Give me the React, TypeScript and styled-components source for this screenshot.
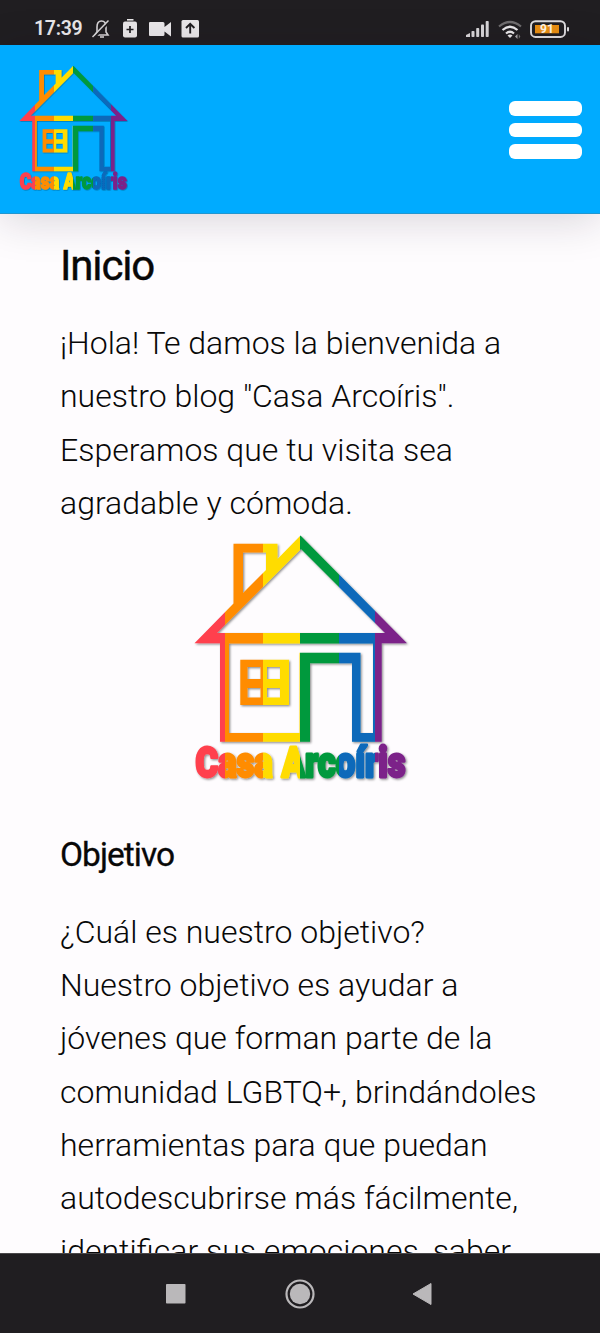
import React from "react";
import styled, { createGlobalStyle } from "styled-components";

const GlobalStyle = createGlobalStyle`
  * { box-sizing: border-box; }
  body { margin: 0; background: #fefcfe; font-family: Roboto, sans-serif; color: #080808; }
`;

const Screen = styled.div`
  display: flex;
  flex-direction: column;
  width: 600px;
  height: 1333px;
  overflow: hidden;
`;

const StatusBar = styled.div`
  display: flex;
  align-items: center;
  flex: none;
  height: 45px;
  padding: 13px 30px 0 34px;
  background: #201e21;
  color: #e9e7e9;
`;

const Clock = styled.span`
  width: 57px;
  font-size: 19.5px;
  line-height: 32px;
  font-weight: 600;
  letter-spacing: -0.3px;
`;

const StatusIcons = styled.svg<{ $push?: boolean }>`
  display: block;
  flex: none;
  margin-left: ${(p) => (p.$push ? "auto" : "0")};
`;

const Header = styled.header`
  display: flex;
  flex: none;
  align-items: flex-start;
  justify-content: space-between;
  height: 169px;
  padding: 17.5px 18px 0 17px;
  background: #00abff;
  border-bottom: 1px solid #2196cf;
  box-shadow: 0 6px 40px rgba(30, 20, 40, 0.17);
  z-index: 1;
`;

const MenuButton = styled.button`
  display: flex;
  flex-direction: column;
  gap: 7px;
  width: 73px;
  margin: 38.5px 0 0;
  padding: 0;
  border: 0;
  background: none;
`;

const MenuBar = styled.span`
  height: 14.7px;
  border-radius: 6px;
  background: #fff;
`;

const Content = styled.main`
  flex: 1;
  min-height: 0;
  overflow: hidden;
  padding: 27px 0 0 60px;
`;

const Title = styled.h1`
  margin: 0;
  font-size: 42px;
  line-height: 50px;
  font-weight: 400;
  letter-spacing: -1.15px;
  -webkit-text-stroke: 0.4px #080808;
`;

const Subtitle = styled.h2`
  margin: 39.5px 0 0;
  font-size: 33.5px;
  line-height: 50px;
  font-weight: 400;
  letter-spacing: -0.95px;
  -webkit-text-stroke: 0.3px #080808;
`;

const Text = styled.p`
  margin: 26px 0 0;
  font-size: 32px;
  line-height: 53.3px;
  font-weight: 300;
  white-space: nowrap;
`;

const Figure = styled.div`
  display: flex;
  justify-content: center;
  width: 482px;
`;

const LogoSvg = styled.svg`
  display: block;
  flex: none;
`;

const NavBar = styled.nav`
  display: flex;
  flex: none;
  align-items: center;
  justify-content: center;
  height: 80px;
  padding-right: 1px;
  background: #201e21;
  border-top: 1px solid #4a484a;
`;

const bands: [string, number, number][] = [
  ["#ff3f4d", 190, 225],
  ["#ff8c00", 225, 263],
  ["#ffdc00", 263, 300.5],
  ["#06993c", 300.5, 339],
  ["#0769ba", 339, 375],
  ["#7b2189", 375, 412],
];

function Logo({ id, width, height, shade }: { id: string; width: number; height: number; shade: number }) {
  return (
    <LogoSvg width={width} height={height} viewBox="190 530 222 260" preserveAspectRatio="none" aria-label="Casa Arcoíris">
      <defs>
        <linearGradient id={id} gradientUnits="userSpaceOnUse" x1="190" y1="0" x2="412" y2="0">
          {bands.map(([color, from, to]) => (
            <React.Fragment key={color}>
              <stop offset={(from - 190) / 222} stopColor={color} />
              <stop offset={(to - 190) / 222} stopColor={color} />
            </React.Fragment>
          ))}
        </linearGradient>
        <filter id={`${id}-shadow`} x="-5%" y="-5%" width="110%" height="110%">
          <feDropShadow dx="1.2" dy="1.2" stdDeviation="0.9" floodColor="#000" floodOpacity={shade} />
        </filter>
      </defs>
      <g fill={`url(#${id})`} filter={`url(#${id}-shadow)`}>
        <path
          fillRule="evenodd"
          d="M300.5 535.5L407 643.3H381.7V741.7H352V663.3H310V741.7H220V643.3H194.5L233.5 603.5V543.7H277.5V559ZM301 549L217 633H385ZM243 552.5V593L266 570V552.5ZM229 643.5V733H299.5V652.7H360.5V733H373V643.5Z"
        />
        <path
          fillRule="evenodd"
          d="M240.3 659.7H289V705H240.3ZM247.5 667V679H260.5V667ZM267 667V679H280V667ZM247.5 688V697.5H260.5V688ZM267 688V697.5H280V688Z"
        />
        <text
          x="195.500"
          y="777"
          textLength="210"
          lengthAdjust="spacingAndGlyphs"
          fontFamily="Roboto, sans-serif"
          fontWeight="900"
          fontSize="42"
          stroke={`url(#${id})`}
          strokeWidth="2.8"
          strokeLinejoin="round"
        >
          Casa Arcoíris
        </text>
      </g>
    </LogoSvg>
  );
}

export default function App() {
  return (
    <Screen>
      <GlobalStyle />
      <StatusBar>
        <Clock>17:39</Clock>
        <StatusIcons width="110" height="24" viewBox="91 17 110 24">
          <path d="M95 35H108L106 32V27Q106 21 101.500 21Q97 21 97 27V32Z" fill="none" stroke="#d6d4d6" strokeWidth="1.6" />
          <path d="M100 37h4" stroke="#d6d4d6" strokeWidth="1.6" />
          <path d="M94 38L110 21" stroke="#201e21" strokeWidth="2" />
          <path d="M92.500 37L108.500 20.500" stroke="#d6d4d6" strokeWidth="1.5" />
          <rect x="123" y="21.500" width="14" height="16" rx="2" fill="#e9e7e9" />
          <path d="M127 19.800h6.500" stroke="#e9e7e9" strokeWidth="1.6" />
          <path d="M126.500 29.500h7M130 26v7" stroke="#201e21" strokeWidth="1.700" />
          <path d="M150 22h13q1.500 0 1.500 1.500v3.500l6.500-5v14.500l-6.500-5V34.500q0 1.500-1.500 1.500h-13q-1 0-1-1V23q0-1 1-1Z" fill="#e9e7e9" />
          <rect x="181.500" y="20" width="17.500" height="17.500" rx="1.500" fill="#e9e7e9" />
          <path d="M190.200 33.500V23.800M186 28l4.200-4.200 4.200 4.200" fill="none" stroke="#201e21" strokeWidth="1.9" />
        </StatusIcons>
        <StatusIcons $push width="105" height="24" viewBox="465 17 105 24">
          <g fill="#d8d6d8">
            <path d="M466 37v-2l4-2v4Z" />
            <rect x="471.500" y="31" width="3" height="6" rx="0.800" />
            <rect x="476.200" y="28" width="3" height="9" rx="0.800" />
            <rect x="481" y="24.500" width="3" height="12.500" rx="0.800" />
            <rect x="485.700" y="21" width="3" height="16" rx="0.800" />
          </g>
          <g fill="none" strokeWidth="2.200">
            <path d="M499 26.500Q510 17.500 521 26.500" stroke="#6f6d6f" />
            <path d="M502.500 30Q510 23.500 517.500 30" stroke="#e9e7e9" />
            <path d="M506 33.500Q510 30 514 33.500" stroke="#e9e7e9" />
          </g>
          <path d="M507.500 35.500Q510 33.500 512.500 35.500L510 38Z" fill="#e9e7e9" />
          <path d="M517.500 34v5l-2.500-2.500Z" fill="#a9a7a9" />
          <path d="M518.800 34v5l1.500-2.500Z" fill="#777" />
          <rect x="531" y="21.200" width="34" height="15.800" rx="4.500" fill="none" stroke="#dedcde" strokeWidth="1.900" />
          <rect x="535" y="25" width="24" height="8.300" fill="#e98e12" />
          <rect x="567" y="27" width="2" height="4.500" rx="1" fill="#dedcde" />
          <text x="547" y="33.300" textAnchor="middle" fill="#fff4e4" fontFamily="Roboto, sans-serif" fontSize="12" fontWeight="700">91</text>
        </StatusIcons>
      </StatusBar>
      <Header>
        <Logo id="logo-header" width={113} height={133} shade={0.35} />
        <MenuButton aria-label="Menú">
          <MenuBar />
          <MenuBar />
          <MenuBar />
        </MenuButton>
      </Header>
      <Content>
        <Title>Inicio</Title>
        <Text>
          ¡Hola! Te damos la bienvenida a<br />
          nuestro blog "Casa Arcoíris".<br />
          Esperamos que tu visita sea<br />
          agradable y cómoda.
        </Text>
        <Figure>
          <Logo id="logo-main" width={222} height={260} shade={0.45} />
        </Figure>
        <Subtitle>Objetivo</Subtitle>
        <Text>
          ¿Cuál es nuestro objetivo?<br />
          Nuestro objetivo es ayudar a<br />
          jóvenes que forman parte de la<br />
          comunidad LGBTQ+, brindándoles<br />
          herramientas para que puedan<br />
          autodescubrirse más fácilmente,<br />
          identificar sus emociones, saber
        </Text>
      </Content>
      <NavBar>
        <svg width="270" height="34" viewBox="164.500 1276.500 270 34">
          <rect x="165.500" y="1283.500" width="19.500" height="19.500" rx="0.800" fill="#bab8ba" />
          <circle cx="299.500" cy="1293.500" r="10.200" fill="#bab8ba" />
          <circle cx="299.500" cy="1293.500" r="13.500" fill="none" stroke="#bab8ba" strokeWidth="2.200" />
          <path d="M430.500 1283V1304L412.500 1293.500Z" fill="#bab8ba" stroke="#bab8ba" strokeLinejoin="round" />
        </svg>
      </NavBar>
    </Screen>
  );
}
